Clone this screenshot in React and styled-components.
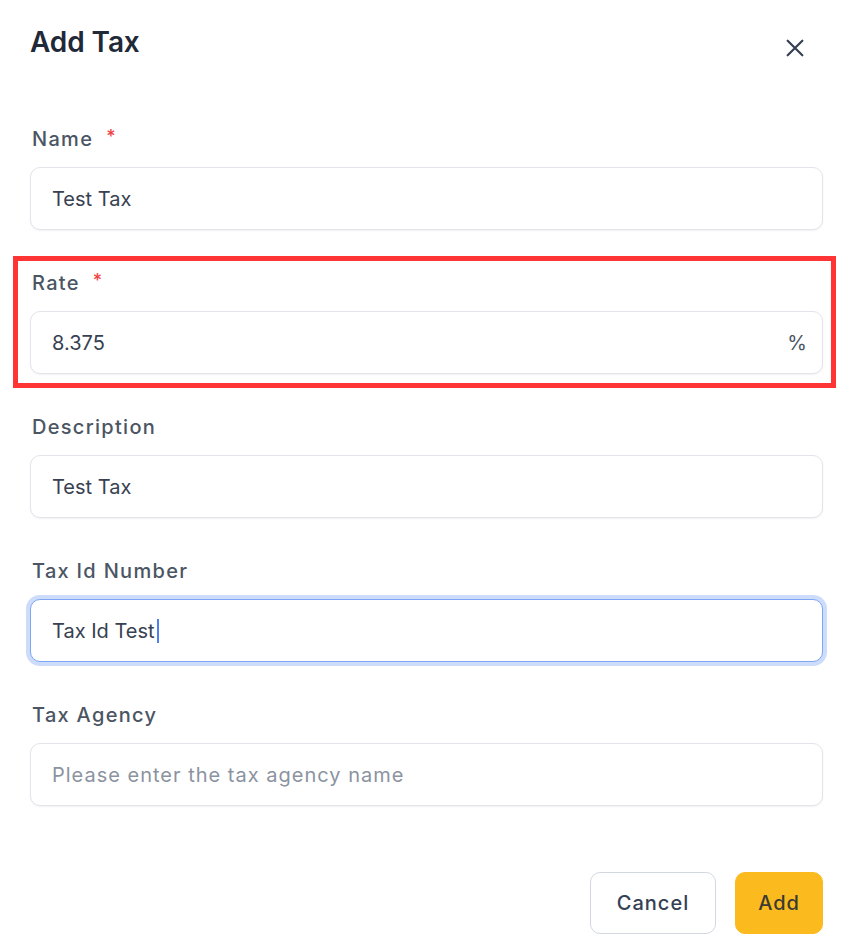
import React from "react";
import styled, { createGlobalStyle } from "styled-components";

const Global = createGlobalStyle`
  html, body { margin: 0; padding: 0; background: #ffffff; }
  body { font-family: Inter, "Noto Sans", "Liberation Sans", sans-serif; -webkit-font-smoothing: antialiased; }
  * { box-sizing: border-box; }
`;

const Dialog = styled.div`
  width: 855px;
  min-height: 945px;
  padding: 24px 32px 0 30px;
  background: #ffffff;
`;

const Header = styled.div`
  display: flex;
  align-items: center;
  justify-content: space-between;
  height: 36px;
`;

const Title = styled.h2`
  margin: 0;
  font-size: 28px;
  line-height: 36px;
  font-weight: 600;
  color: #1f2937;
  letter-spacing: -0.1px;
`;

const CloseButton = styled.button`
  display: flex;
  align-items: center;
  justify-content: center;
  width: 32px;
  height: 32px;
  margin-top: 12px;
  margin-right: 12px;
  padding: 0;
  border: none;
  background: transparent;
  color: #374151;
  cursor: pointer;
`;

const Form = styled.form`
  display: flex;
  flex-direction: column;
  gap: 37px;
  margin-top: 63px;
`;

const Field = styled.div`
  position: relative;
  display: flex;
  flex-direction: column;
  gap: 14px;
  ${(p) =>
    p.$highlight &&
    `
    &::after {
      content: "";
      position: absolute;
      top: -11px;
      left: -17px;
      right: -13px;
      bottom: -14px;
      border: 5px solid #ff3535;
      pointer-events: none;
    }
  `}
`;

const Label = styled.label`
  display: flex;
  align-items: center;
  gap: 13px;
  padding: 2px 0 0 2px;
  font-size: 20px;
  line-height: 28px;
  font-weight: 500;
  color: #4b5563;
  letter-spacing: 1.3px;
`;

const Required = styled.span`
  color: #ef4444;
  font-size: 18px;
  line-height: 1;
  margin-top: -4px;
`;

const InputBox = styled.div`
  display: flex;
  align-items: center;
  height: 63px;
  padding: 0 15px 0 21px;
  border-radius: 10px;
  background: #ffffff;
  border: 1.5px solid ${(p) => (p.$focused ? "#7ea6f2" : "#e3e5ea")};
  box-shadow: ${(p) =>
    p.$focused
      ? "0 0 0 4px #cddcfa"
      : "0 1px 2px rgba(16, 24, 40, 0.06)"};
  font-size: 20px;
  color: #374151;
`;

const Value = styled.span`
  flex: 1;
  display: flex;
  align-items: center;
  color: ${(p) => (p.$placeholder ? "#8b93a1" : "#374151")};
  letter-spacing: ${(p) => (p.$placeholder ? "1px" : "0")};
  white-space: nowrap;
`;

const Caret = styled.span`
  display: inline-block;
  width: 2px;
  height: 24px;
  margin-left: 2px;
  background: #4f7ff0;
`;

const Suffix = styled.span`
  color: #4b5563;
  font-size: 20px;
`;

const Footer = styled.div`
  display: flex;
  justify-content: flex-end;
  gap: 19px;
  margin-top: 66px;
`;

const Button = styled.button`
  height: 62px;
  width: ${(p) => (p.$primary ? "88px" : "126px")};
  padding: 0;
  border-radius: 10px;
  font-family: Inter, "Liberation Sans", sans-serif;
  font-size: 20px;
  font-weight: 500;
  letter-spacing: 1px;
  cursor: pointer;
  border: 1.5px solid ${(p) => (p.$primary ? "#fbbb1f" : "#d3d8e0")};
  background: ${(p) => (p.$primary ? "#fbbb1f" : "#ffffff")};
  color: ${(p) => (p.$primary ? "#3b3a33" : "#344054")};
`;

const fields = [
  { label: "Name", required: true, value: "Test Tax" },
  { label: "Rate", required: true, value: "8.375", suffix: "%", highlight: true },
  { label: "Description", value: "Test Tax" },
  { label: "Tax Id Number", value: "Tax Id Test", focused: true },
  { label: "Tax Agency", placeholder: "Please enter the tax agency name" },
];

export default function App() {
  return (
    <>
      <Global />
      <Dialog>
        <Header>
          <Title>Add Tax</Title>
          <CloseButton type="button" aria-label="Close">
            <svg width="22" height="22" viewBox="0 0 24 24" fill="none" stroke="currentColor" strokeWidth="2.4" strokeLinecap="round">
              <path d="M4 4L20 20M20 4L4 20" />
            </svg>
          </CloseButton>
        </Header>
        <Form onSubmit={(e) => e.preventDefault()}>
          {fields.map((f) => (
            <Field key={f.label} $highlight={f.highlight}>
              <Label>
                {f.label}
                {f.required && <Required>*</Required>}
              </Label>
              <InputBox $focused={f.focused}>
                <Value $placeholder={!f.value}>
                  {f.value || f.placeholder}
                  {f.focused && <Caret />}
                </Value>
                {f.suffix && <Suffix>{f.suffix}</Suffix>}
              </InputBox>
            </Field>
          ))}
        </Form>
        <Footer>
          <Button type="button">Cancel</Button>
          <Button type="button" $primary>Add</Button>
        </Footer>
      </Dialog>
    </>
  );
}
